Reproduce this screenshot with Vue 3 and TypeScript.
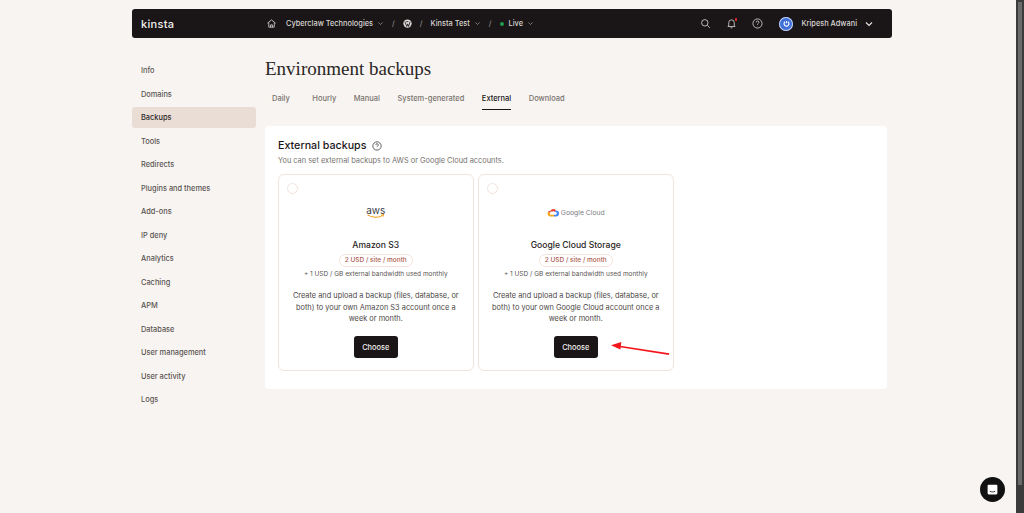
<script setup lang="ts">
const navItems = [
  'Info', 'Domains', 'Backups', 'Tools', 'Redirects', 'Plugins and themes', 'Add-ons', 'IP deny',
  'Analytics', 'Caching', 'APM', 'Database', 'User management', 'User activity', 'Logs',
]
const tabs = ['Daily', 'Hourly', 'Manual', 'System-generated', 'External', 'Download']
const plans = [
  { id: 'aws', name: 'Amazon S3', account: 'Amazon S3' },
  { id: 'gcp', name: 'Google Cloud Storage', account: 'Google Cloud' },
]
</script>

<template>
  <div class="page">
    <div class="shell">
      <header class="topbar">
        <span class="logo">kinsta</span>
        <div class="crumbs">
          <svg class="ico home" viewBox="0 0 24 24"><path d="M3 11.500 12 4l9 7.500M6 10v10h12V10M10 20v-5h4v5" /></svg>
          <span class="crumb first">Cyberclaw Technologies</span>
          <svg class="chev" viewBox="0 0 10 10"><path d="M2 3.500 5 6.500 8 3.500" /></svg>
          <span class="sep">/</span>
          <svg class="wp" viewBox="0 0 24 24"><circle cx="12" cy="12" r="11" /><path d="M5 7l5 13 2.500-7L15 20l4-13M8.500 7h6" /></svg>
          <span class="sep">/</span>
          <span class="crumb">Kinsta Test</span>
          <svg class="chev" viewBox="0 0 10 10"><path d="M2 3.500 5 6.500 8 3.500" /></svg>
          <span class="sep">/</span>
          <span class="dot"></span>
          <span class="crumb">Live</span>
          <svg class="chev" viewBox="0 0 10 10"><path d="M2 3.500 5 6.500 8 3.500" /></svg>
        </div>
        <div class="tools">
          <svg class="ico" viewBox="0 0 24 24"><circle cx="10.500" cy="10.500" r="7" /><path d="m16 16 5.500 5.500" /></svg>
          <span class="bell">
            <svg class="ico" viewBox="0 0 24 24"><path d="M6 17V10a6 6 0 0 1 12 0v7l2 1.500H4L6 17ZM10 21.500h4" /></svg>
            <i class="badge"></i>
          </span>
          <svg class="ico" viewBox="0 0 24 24"><circle cx="12" cy="12" r="10" /><path d="M9.200 9.500a2.900 2.900 0 1 1 4.400 2.400c-1 .7-1.600 1.300-1.600 2.600M12 17.500v.5" /></svg>
          <div class="user">
            <span class="avatar">
              <svg viewBox="0 0 24 24"><path d="M8 7.500a6.500 6.500 0 1 0 8 0M12 5v6" /></svg>
            </span>
            <span class="uname">Kripesh Adwani</span>
            <svg class="chev big" viewBox="0 0 10 10"><path d="M2 3.500 5 6.500 8 3.500" /></svg>
          </div>
        </div>
      </header>

      <div class="body">
        <nav class="side">
          <a v-for="item in navItems" :key="item" class="nav" :class="{ on: item === 'Backups' }">{{ item }}</a>
        </nav>

        <main class="main">
          <h1>Environment backups</h1>
          <div class="tabs">
            <span v-for="tab in tabs" :key="tab" class="tab" :class="{ on: tab === 'External' }">{{ tab }}</span>
          </div>

          <section class="panel">
            <h2>
              External backups
              <svg class="help" viewBox="0 0 24 24"><circle cx="12" cy="12" r="10" /><path d="M9.200 9.500a2.900 2.900 0 1 1 4.400 2.400c-1 .7-1.600 1.300-1.600 2.600M12 17.500v.5" /></svg>
            </h2>
            <p class="sub">You can set external backups to AWS or Google Cloud accounts.</p>

            <div class="cards">
              <article v-for="plan in plans" :key="plan.id" class="card">
                <span class="radio"></span>
                <div class="brand">
                  <div v-if="plan.id === 'aws'" class="aws">
                    <span>aws</span>
                    <svg viewBox="0 0 24 6"><path class="smile" d="M2 1c6 4 14 4 19 .5" /><path class="tip" d="M19.500 .8 22.500 .5 21.800 3.200" /></svg>
                  </div>
                  <div v-else class="gcp">
                    <svg viewBox="0 0 24 18">
                      <path d="M7 5.500a6.500 6.500 0 0 1 11-.5l-3 3a3 3 0 0 0-5-.5Z" fill="#ea4335" />
                      <path d="M18 5a6 6 0 0 1 0 12h-4v-3.500h4a2.500 2.500 0 0 0-3-5.500Z" fill="#4285f4" />
                      <path d="M6 17a6 6 0 0 1-3.500-10L6 10a2.500 2.500 0 0 0 1 3.500h7V17Z" fill="#f4a51c" />
                      <path d="M2.500 7A6 6 0 0 1 7 5.500l3 2a3 3 0 0 0-4 2.500Z" fill="#ea4335" />
                    </svg>
                    <span>Google Cloud</span>
                  </div>
                </div>
                <h3>{{ plan.name }}</h3>
                <span class="price">2 USD / site / month</span>
                <p class="extra">+ 1 USD / GB external bandwidth used monthly</p>
                <p class="desc">Create and upload a backup (files, database, or both) to your own {{ plan.account }} account once a week or month.</p>
                <button type="button" class="choose">Choose</button>
              </article>
            </div>
          </section>
        </main>
      </div>
    </div>

    <svg class="arrow" viewBox="0 0 64 16"><path d="M62 13 8 4.500" /><path class="head" d="M0 3.500 11 0 10 8Z" /></svg>

    <span class="chat">
      <svg viewBox="0 0 24 24"><path d="M5 3h14a2 2 0 0 1 2 2v14a2 2 0 0 1-2 2H5a2 2 0 0 1-2-2V5a2 2 0 0 1 2-2Z" /><path class="mouth" d="M7 15c3 2 7 2 10 0" /></svg>
    </span>
    <div class="scrollbar"><i></i></div>
  </div>
</template>

<style scoped>
.page {
  position: relative;
  height: 513px;
  overflow: hidden;
  background: #f8f4f1;
  color: #1a1617;
  font-family: Inter, "Liberation Sans", sans-serif;
  font-size: 7.400px;
}
.shell {
  width: 760px;
  margin-left: 132px;
  padding-top: 9px;
}
.topbar {
  display: flex;
  align-items: center;
  height: 29px;
  padding: 0 9px;
  border-radius: 3px;
  background: #1a1617;
  color: #d9d5d3;
}
.logo {
  width: 125px;
  font-size: 11px;
  font-weight: 500;
  letter-spacing: .3px;
  color: #f2efed;
}
.crumbs {
  display: flex;
  align-items: center;
  font-weight: 500;
}
.ico {
  width: 11px;
  height: 11px;
  fill: none;
  stroke: #e4e0de;
  stroke-width: 1.700;
}
.crumb.first {
  margin-left: 9px;
}
.chev {
  width: 7px;
  height: 7px;
  margin-left: 4px;
  fill: none;
  stroke: #a9a4a2;
  stroke-width: 1;
}
.chev.big {
  width: 10px;
  height: 10px;
  margin-left: 7px;
  stroke: #e4e0de;
  stroke-width: 1.200;
}
.sep {
  margin: 0 8px;
  color: #8f8a88;
}
.wp {
  width: 9px;
  height: 9px;
  fill: #dedad8;
  stroke: #1a1617;
  stroke-width: 2.200;
}
.wp circle {
  stroke: none;
}
.wp path {
  fill: none;
}
.dot {
  width: 4px;
  height: 4px;
  margin-right: 5px;
  border-radius: 50%;
  background: #1e9e4a;
}
.tools {
  display: flex;
  align-items: center;
  gap: 15px;
  margin-left: auto;
  padding-right: 9px;
}
.bell {
  position: relative;
  display: flex;
}
.badge {
  position: absolute;
  top: 0;
  right: 0;
  width: 2.500px;
  height: 2.500px;
  border-radius: 50%;
  background: #f0282d;
}
.user {
  display: flex;
  align-items: center;
  margin-left: 1px;
}
.avatar {
  display: flex;
  align-items: center;
  justify-content: center;
  width: 14px;
  height: 14px;
  margin-right: 8px;
  border-radius: 50%;
  background: #3f6fd8;
  box-shadow: inset 0 0 0 1px #c4d2f0;
}
.avatar svg {
  width: 9px;
  height: 9px;
  fill: none;
  stroke: #fff;
  stroke-width: 3;
}
.uname {
  font-weight: 500;
}
.body {
  display: flex;
  padding-top: 20px;
}
.side {
  display: flex;
  flex-direction: column;
  gap: 2.500px;
  width: 124px;
  margin-right: 9px;
  padding-top: 2px;
}
.nav {
  height: 21px;
  padding-left: 9px;
  border-radius: 3px;
  font-weight: 500;
  line-height: 21px;
  color: #5a5553;
}
.nav.on {
  background: #eaddd6;
  color: #2a2625;
}
.main {
  flex: 1;
  margin-right: 5px;
}
h1 {
  margin: 0;
  font-family: "Liberation Serif", serif;
  font-size: 19px;
  font-weight: 400;
  line-height: 22px;
  color: #2a2625;
}
.tabs {
  display: flex;
  gap: 17.500px;
  height: 24px;
  margin-top: 9px;
  padding-left: 7px;
  font-size: 7.500px;
  font-weight: 500;
  color: #78736f;
}
.tab {
  height: 20px;
  line-height: 20px;
}
.tab:first-child {
  margin-right: 5px;
}
.tab.on {
  border-bottom: 1px solid #1a1617;
  color: #1a1617;
}
.panel {
  box-sizing: border-box;
  height: 263px;
  margin-top: 13px;
  padding: 13px;
  border-radius: 4px;
  background: #fff;
}
h2 {
  display: flex;
  align-items: center;
  margin: 0;
  font-size: 10.700px;
  font-weight: 500;
  line-height: 14px;
}
.help {
  width: 10px;
  height: 10px;
  margin-left: 6px;
  fill: none;
  stroke: #1a1617;
  stroke-width: 1.600;
}
.sub {
  margin: 2px 0 0;
  line-height: 11px;
  color: #78736f;
}
.cards {
  display: flex;
  gap: 4.500px;
  margin-top: 8px;
}
.card {
  position: relative;
  display: flex;
  flex-direction: column;
  align-items: center;
  width: 195.500px;
  height: 197px;
  box-sizing: border-box;
  padding: 0 11px;
  border: 1px solid #f0e4de;
  border-radius: 6px;
  text-align: center;
}
.radio {
  position: absolute;
  top: 8px;
  left: 8px;
  width: 11px;
  height: 11px;
  box-sizing: border-box;
  border: 1px solid #f0e4de;
  border-radius: 50%;
}
.brand {
  display: flex;
  align-items: center;
  justify-content: center;
  height: 24px;
  margin-top: 25px;
}
.aws {
  display: flex;
  flex-direction: column;
  align-items: center;
  font-size: 10px;
  font-weight: 400;
  line-height: 9px;
  color: #3a3f48;
}
.aws svg {
  width: 19px;
  height: 5px;
  margin-top: -1px;
  fill: none;
}
.smile {
  stroke: #f29100;
  stroke-width: 1.300;
}
.tip {
  stroke: #f29100;
  stroke-width: 1;
}
.gcp {
  display: flex;
  align-items: center;
  gap: 2px;
  font-size: 6.800px;
  color: #7a7e82;
}
.gcp svg {
  width: 12px;
  height: 9px;
}
h3 {
  margin: 15px 0 0;
  font-size: 8.600px;
  font-weight: 500;
  line-height: 12px;
  color: #2a2625;
}
.price {
  margin-top: 3px;
  padding: 0 5px;
  border: 1px solid #f6e2dc;
  border-radius: 7px;
  font-size: 6.500px;
  font-weight: 500;
  line-height: 11px;
  color: #ad5a4e;
}
.extra {
  margin: 2px 0 0;
  font-size: 6.500px;
  line-height: 11px;
  color: #5a5553;
}
.desc {
  margin: 10px 0 0;
  line-height: 11.700px;
  color: #4d4846;
}
.choose {
  width: 44px;
  height: 22px;
  margin-top: 11px;
  padding: 0;
  border: 0;
  border-radius: 3px;
  background: #1a1617;
  font: 500 7.400px Inter, "Liberation Sans", sans-serif;
  color: #f2efed;
}
.arrow {
  position: absolute;
  top: 342px;
  left: 610px;
  width: 62px;
  height: 15px;
}
.arrow path {
  fill: none;
  stroke: #f5161c;
  stroke-width: 1.800;
}
.arrow .head {
  fill: #f5161c;
  stroke: none;
}
.chat {
  position: absolute;
  top: 477px;
  left: 980px;
  display: flex;
  align-items: center;
  justify-content: center;
  width: 25px;
  height: 25px;
  border-radius: 50%;
  background: #111;
}
.chat svg {
  width: 13px;
  height: 13px;
  fill: #fff;
}
.chat .mouth {
  fill: none;
  stroke: #111;
  stroke-width: 1.500;
}
.scrollbar {
  position: absolute;
  top: 0;
  right: 0;
  bottom: 0;
  width: 8px;
  background: #3b3b3b;
}
.scrollbar i {
  display: block;
  width: 4px;
  height: 483px;
  margin: 2px 0 0 2px;
  background: #6b6b6b;
}
</style>
